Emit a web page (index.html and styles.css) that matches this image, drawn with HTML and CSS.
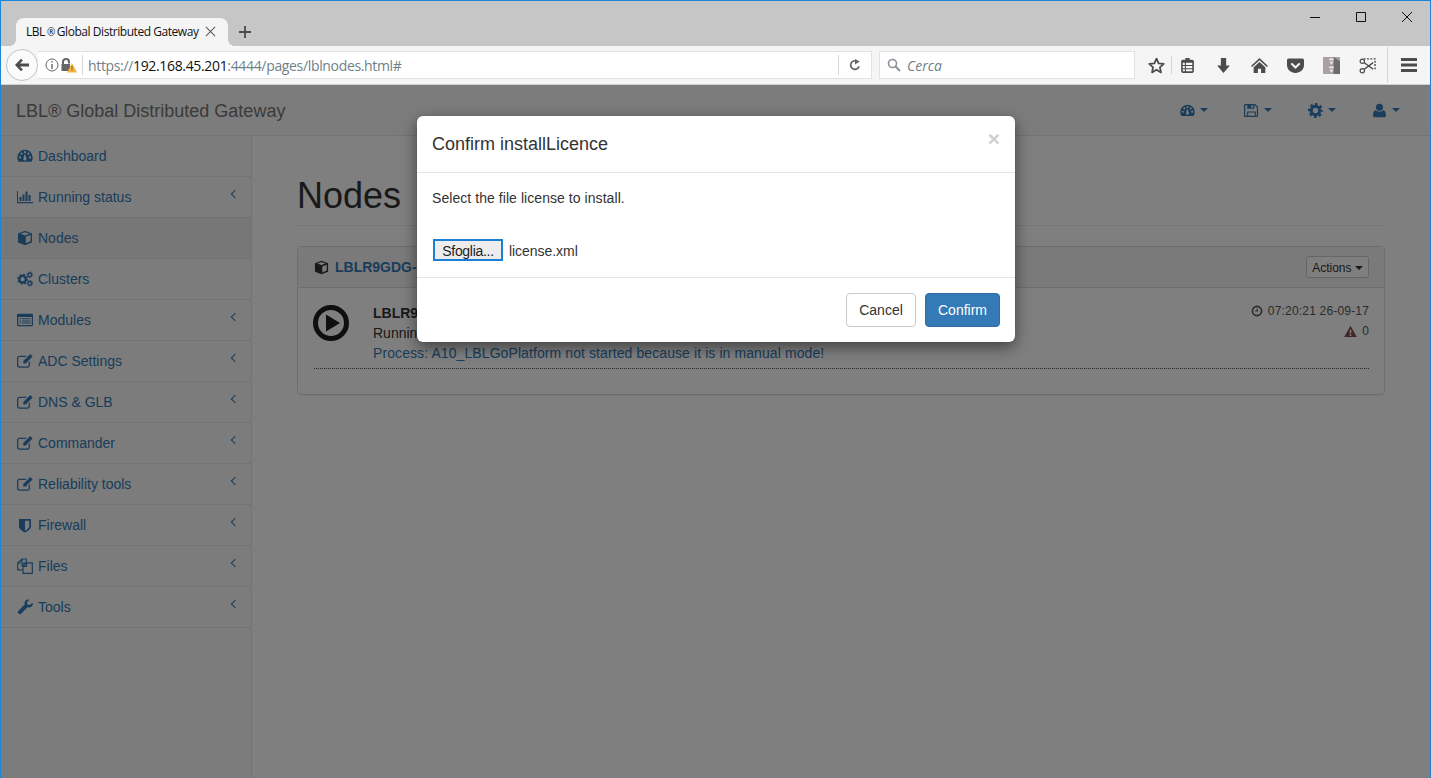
FILE: index.html
```html
<!DOCTYPE html>
<html lang="en">
<head>
<meta charset="utf-8">
<title>LBL® Global Distributed Gateway</title>
<link rel="stylesheet" href="styles.css">
</head>
<body>
<svg class="sprite" width="0" height="0" aria-hidden="true">
  <symbol id="i-dash" viewBox="0 0 16 16"><path fill-rule="evenodd" d="M8 1.800A7.700 7.700 0 0 0 .3 9.500c0 1.500.4 2.900 1.100 4 .1.200.3.300.5.300h12.200c.2 0 .4-.1.500-.3.700-1.100 1.100-2.500 1.100-4A7.700 7.700 0 0 0 8 1.800zM3 10.500a1.100 1.100 0 1 1 0-2.200 1.100 1.100 0 0 1 0 2.200zM4.600 6.800a1.100 1.100 0 1 1 0-2.200 1.100 1.100 0 0 1 0 2.200zM8 5.300a1.100 1.100 0 1 1 0-2.200 1.100 1.100 0 0 1 0 2.200zM8.900 12.300a1.600 1.600 0 0 1-2.500-1.500l.9-4.200h.8l1.400 4a1.600 1.600 0 0 1-.6 1.700zM11.400 6.800a1.100 1.100 0 1 1 0-2.200 1.100 1.100 0 0 1 0 2.200zM13 10.500a1.100 1.100 0 1 1 0-2.200 1.100 1.100 0 0 1 0 2.200z"/></symbol>
  <symbol id="i-bars" viewBox="0 0 16 16"><path d="M0 2h1v11h15v1.200H0zM2.500 8h2v4h-2zM5.500 5.500h2V12h-2zM8.500 2.500h2V12h-2zM11.500 6h2v6h-2z"/></symbol>
  <symbol id="i-cube" viewBox="0 0 16 16"><path fill-rule="evenodd" d="M8 .8l7 2.600v9L8 15.300l-7-2.900v-9zM3.500 3.700L8 5.400l4.500-1.700L8 2.200zM8.800 6.800v6.500l4.800-2V5z"/></symbol>
  <symbol id="i-cogs" viewBox="0 0 16 16"><circle cx="5.600" cy="8.200" r="3.300" fill="none" stroke="currentColor" stroke-width="2.400"/><circle cx="5.600" cy="8.200" r="4.800" fill="none" stroke="currentColor" stroke-width="1.400" stroke-dasharray="1.900 1.870"/><circle cx="12.800" cy="3.800" r="1.800" fill="none" stroke="currentColor" stroke-width="1.300"/><circle cx="12.800" cy="3.800" r="2.800" fill="none" stroke="currentColor" stroke-width="1" stroke-dasharray="1.200 1"/><circle cx="12.800" cy="12.300" r="1.800" fill="none" stroke="currentColor" stroke-width="1.300"/><circle cx="12.800" cy="12.300" r="2.800" fill="none" stroke="currentColor" stroke-width="1" stroke-dasharray="1.200 1"/></symbol>
  <symbol id="i-list" viewBox="0 0 16 16"><path fill-rule="evenodd" d="M1.200 1.800h13.600c.6 0 1.200.5 1.200 1.200v10c0 .7-.6 1.200-1.200 1.200H1.200C.6 14.200 0 13.700 0 13V3c0-.7.6-1.200 1.200-1.200zM1.300 5v7.700c0 .1.100.2.200.2h13c.1 0 .2-.1.200-.2V5zM2.500 6.200h1.800v1H2.500zM5 6.200h8.500v1H5zM2.500 8.400h1.800v1H2.500zM5 8.400h8.500v1H5zM2.500 10.600h1.800v1H2.500zM5 10.600h8.500v1H5z"/></symbol>
  <symbol id="i-edit" viewBox="0 0 16 16"><path d="M2.500 2.800h7.300L8.500 4.100H2.500c-.7 0-1.200.5-1.200 1.200v6.900c0 .7.500 1.200 1.200 1.200h7.900c.7 0 1.200-.5 1.200-1.200V9.300l1.300-1.300v4.200c0 1.400-1.100 2.500-2.500 2.500H2.500C1.100 14.700 0 13.600 0 12.200V5.300c0-1.400 1.100-2.500 2.500-2.500z"/><path d="M13.300 1.100l2.300 2.300-7 7H6.300V8.100z"/></symbol>
  <symbol id="i-shield" viewBox="0 0 16 16"><path fill-rule="evenodd" d="M2 2h12v7.500c0 3-4.500 5.300-6 6-1.500-.7-6-3-6-6zM8 3.700v10c1.700-.9 4.300-2.600 4.300-4.200V3.700z"/></symbol>
  <symbol id="i-files" viewBox="0 0 16 16"><path fill="none" stroke="currentColor" stroke-width="1.200" d="M5 8.500V6.800L8 4.500M5 11.800H.7V5L5 1h4.300v3.500M5 1v4H.7M6 15.300V8.300L9.500 4.800h5.800v10.500zM9.500 4.800v3.500H6"/></symbol>
  <symbol id="i-wrench" viewBox="0 0 16 16"><path d="M15.500 3.800c.3.800.3 1.700 0 2.400-.6 1.500-2.200 2.500-3.800 2.200-.4-.1-.7-.2-1-.3l-6.600 6.600c-.6.600-1.600.6-2.200 0l-.6-.6c-.6-.6-.6-1.600 0-2.200l6.600-6.600c-.2-.4-.3-.8-.3-1.300C7.600 2 9.300.5 11.200.5c.4 0 .8.100 1.200.2L9.900 3.300l.5 2.300 2.300.5z"/></symbol>
  <symbol id="i-save" viewBox="0 0 16 16"><path fill-rule="evenodd" d="M1.500 1h10.300L15 4.200v9.300c0 .8-.7 1.500-1.500 1.500h-12C.7 15 0 14.300 0 13.500v-11C0 1.700.7 1 1.500 1zM1.300 2.300v11.400h2V9h9.400v4.700h1V4.700l-2.400-2.400H11v3.900H3.500V2.300zM4.500 10.200v3.500h7v-3.500zM7.800 2.300V5h1.900V2.300z"/></symbol>
  <symbol id="i-gear" viewBox="0 0 16 16"><circle cx="8" cy="8" r="4.500" fill="none" stroke="currentColor" stroke-width="3.200"/><circle cx="8" cy="8" r="6.900" fill="none" stroke="currentColor" stroke-width="2.200" stroke-dasharray="2.800 2.620" stroke-dashoffset="1.400"/></symbol>
  <symbol id="i-user" viewBox="0 0 16 16"><circle cx="8" cy="4.600" r="3.800"/><path d="M4 7.800c1 1 2.400 1.500 4 1.500s3-.5 4-1.500c1.800.3 2.800 1.800 2.800 4.500v1.200c0 1-.7 1.700-1.700 1.700H2.900c-1 0-1.700-.7-1.700-1.700v-1.200c0-2.700 1-4.200 2.800-4.500z"/></symbol>
  <symbol id="i-clock" viewBox="0 0 16 16"><path fill-rule="evenodd" d="M8 .8a7.200 7.200 0 1 1 0 14.400A7.200 7.200 0 0 1 8 .8zM8 3a5 5 0 1 0 0 10A5 5 0 0 0 8 3zM9 4.800v3.900H5.700V7.300H7.600V4.800z"/></symbol>
  <symbol id="i-warn" viewBox="0 0 16 16"><path fill-rule="evenodd" d="M8 .8l7.800 14.100H.2zM7 5.700l.2 5h1.600l.2-5zM7 11.700v1.700h2v-1.700z"/></symbol>
</svg>

<header class="chrome">
  <div class="tabstrip">
    <div class="tab">
      <span class="tab-title">LBL<span class="reg">®</span>Global Distributed Gateway</span>
      <svg class="tab-x" viewBox="0 0 12 12"><path d="M1 1l10 10M11 1L1 11"/></svg>
    </div>
    <svg class="tab-plus" viewBox="0 0 12 12"><path d="M6 0v12M0 6h12"/></svg>
    <div class="win-controls">
      <svg class="win" viewBox="0 0 10 10"><path d="M0 5.500h10"/></svg>
      <svg class="win" viewBox="0 0 10 10"><path d="M.5.500h9v9h-9z"/></svg>
      <svg class="win" viewBox="0 0 10 10"><path d="M0 0l10 10M10 0L0 10"/></svg>
    </div>
  </div>
  <div class="toolbar">
    <button class="back" aria-label="Back">
      <svg viewBox="0 0 16 16"><path d="M1 8l6-6.300 1.900 1.800-3 3H15v3H5.900l3 3L7 14.300z"/></svg>
    </button>
    <div class="urlbar">
      <svg class="t-info" viewBox="0 0 14 14"><circle cx="7" cy="7" r="6" fill="none" stroke="#666" stroke-width="1"/><path d="M6.300 3h1.400v1.500H6.300zM6.300 6h1.400v5H6.300z" fill="#666"/></svg>
      <svg class="t-lock" viewBox="0 0 16 16"><path d="M1 7.500V5a4 4 0 0 1 8 0v1.500h-2V5a2 2 0 0 0-4 0v2.500zM.5 7h8.500v7H.5z" fill="#666"/><path d="M11 6l5 9.500H6z" fill="#f3b33d"/><path d="M10.600 9h.8v3.500h-.8zM10.600 13h.8v1h-.8z" fill="#5a4a20"/></svg>
      <span class="sep"></span>
      <span class="url"><span class="dim">https://</span>192.168.45.201<span class="dim">:4444/pages/lblnodes.html#</span></span>
      <span class="sep reload-sep"></span>
      <svg class="t-reload" viewBox="0 0 14 14"><path d="M11.800 8.500A5 5 0 1 1 8.500 2.300" fill="none" stroke="#666" stroke-width="2"/><path d="M7 0l5.500 3L7 6.500z" fill="#666"/></svg>
    </div>
    <div class="searchbar">
      <svg class="t-search" viewBox="0 0 14 14"><circle cx="5.500" cy="5.500" r="4" fill="none" stroke="#8f8f9d" stroke-width="1.600"/><path d="M8.500 8.500l4.500 4.500" stroke="#8f8f9d" stroke-width="2"/></svg>
      <span class="search-text">Cerca</span>
    </div>
    <div class="tools">
      <span class="tool star"><svg viewBox="0 0 16 16"><path d="M8 1.500l2 4.500 4.800.5-3.600 3.200 1 4.800L8 12l-4.200 2.500 1-4.800L1.200 6.500 6 6z" fill="none" stroke="#4c4c4c" stroke-width="1.700" stroke-linejoin="round"/></svg></span>
      <span class="tool-sep"></span>
      <span class="tool"><svg viewBox="0 0 16 16"><path fill-rule="evenodd" d="M6 1h4v1.500h2.500c.8 0 1.500.7 1.500 1.500v9.500c0 .8-.7 1.500-1.500 1.500h-9C2.700 15 2 14.300 2 13.500V4c0-.8.7-1.500 1.500-1.500H6zM3.500 5.500v2h2v-2zM6.500 5.500v2h6v-2zM3.500 8.500v2h2v-2zM6.500 8.500v2h6v-2zM3.500 11.500v2h2v-2zM6.500 11.500v2h6v-2z" fill="#4c4c4c"/></svg></span>
      <span class="tool"><svg viewBox="0 0 16 16"><path d="M5.500 1h5v7h3.500L8 15 2 8h3.500z" fill="#4c4c4c"/></svg></span>
      <span class="tool"><svg viewBox="0 0 16 16"><path d="M8 1L0 8.500l1 1L8 3l7 6.500 1-1zM8 4.700l-5.500 5V15h4v-4h3v4h4V9.700z" fill="#4c4c4c"/></svg></span>
      <span class="tool"><svg viewBox="0 0 16 16"><path fill-rule="evenodd" d="M1.500 1.500h13c.8 0 1.500.7 1.500 1.500v4.500c0 4.200-3.500 7.500-8 7.500S0 11.700 0 7.500V3c0-.8.7-1.500 1.500-1.500zM4.700 5.300L3.300 6.700 8 11.200l4.700-4.500-1.400-1.400L8 8.400z" fill="#4c4c4c"/></svg></span>
      <span class="tool"><svg viewBox="0 0 16 16"><path d="M0 0h16v16H0z" fill="#a9a1a6"/><path d="M10 0l6 4v12h-6z" fill="#6c6c6c"/><path d="M6 1.500h4v1.500H6zM6 4.500h4L8 7zM6 9h4v1.500H6zM6 12h4l-2 2.500z" fill="#eee"/></svg></span>
      <span class="tool"><svg viewBox="0 0 18 18"><path d="M5 2h12v11" fill="none" stroke="#4c4c4c" stroke-width="1.500" stroke-dasharray="2 1.500"/><circle cx="3.500" cy="4.500" r="2.300" fill="none" stroke="#4c4c4c" stroke-width="1.300"/><circle cx="3.500" cy="14.500" r="2.300" fill="none" stroke="#4c4c4c" stroke-width="1.300"/><path d="M5.300 5.800L15 13M5.300 13.200L15 6" stroke="#4c4c4c" stroke-width="1.500"/></svg></span>
      <span class="tool-sep menu-sep"></span>
      <span class="tool burger"><svg viewBox="0 0 16 14"><path d="M0 0h16v3H0zM0 5.500h16v3H0zM0 11h16v3H0z" fill="#4c4c4c"/></svg></span>
    </div>
  </div>
</header>

<div class="page">
  <nav class="topnav">
    <a class="brand">LBL® Global Distributed Gateway</a>
    <div class="topnav-menu">
      <a class="menu-item"><svg class="ico"><use href="#i-dash"/></svg><i class="caret"></i></a>
      <a class="menu-item"><svg class="ico"><use href="#i-save"/></svg><i class="caret"></i></a>
      <a class="menu-item"><svg class="ico"><use href="#i-gear"/></svg><i class="caret"></i></a>
      <a class="menu-item"><svg class="ico"><use href="#i-user"/></svg><i class="caret"></i></a>
    </div>
  </nav>
  <div class="content-wrap">
    <aside class="sidebar">
      <a class="side-row"><svg class="ico"><use href="#i-dash"/></svg>Dashboard</a>
      <a class="side-row"><svg class="ico"><use href="#i-bars"/></svg>Running status<span class="chev"></span></a>
      <a class="side-row active"><svg class="ico"><use href="#i-cube"/></svg>Nodes</a>
      <a class="side-row"><svg class="ico"><use href="#i-cogs"/></svg>Clusters</a>
      <a class="side-row"><svg class="ico"><use href="#i-list"/></svg>Modules<span class="chev"></span></a>
      <a class="side-row"><svg class="ico"><use href="#i-edit"/></svg>ADC Settings<span class="chev"></span></a>
      <a class="side-row"><svg class="ico"><use href="#i-edit"/></svg>DNS &amp; GLB<span class="chev"></span></a>
      <a class="side-row"><svg class="ico"><use href="#i-edit"/></svg>Commander<span class="chev"></span></a>
      <a class="side-row"><svg class="ico"><use href="#i-edit"/></svg>Reliability tools<span class="chev"></span></a>
      <a class="side-row"><svg class="ico"><use href="#i-shield"/></svg>Firewall<span class="chev"></span></a>
      <a class="side-row"><svg class="ico"><use href="#i-files"/></svg>Files<span class="chev"></span></a>
      <a class="side-row"><svg class="ico"><use href="#i-wrench"/></svg>Tools<span class="chev"></span></a>
    </aside>
    <main class="main">
      <h1 class="page-title">Nodes</h1>
      <section class="panel">
        <div class="panel-head">
          <svg class="ico ico-dark"><use href="#i-cube"/></svg>
          <a class="panel-title">LBLR9GDG-01</a>
          <button class="btn-xs">Actions <i class="caret caret-dark"></i></button>
        </div>
        <div class="panel-body">
          <div class="node-row">
            <svg class="play" viewBox="0 0 36 36"><circle cx="18" cy="18" r="15.500" fill="none" stroke="#1e1c20" stroke-width="5"/><path d="M13 9.500L27 18l-14 8.500z" fill="#1e1c20"/></svg>
            <div class="node-text">
              <strong>LBLR9GDG-01</strong>
              <span>Running</span>
              <span class="primary">Process: A10_LBLGoPlatform not started because it is in manual mode!</span>
            </div>
            <div class="node-meta">
              <span class="meta-line"><svg class="ico-sm"><use href="#i-clock"/></svg>07:20:21 26-09-17</span>
              <span class="meta-line"><svg class="ico-sm warn"><use href="#i-warn"/></svg>0</span>
            </div>
          </div>
        </div>
      </section>
    </main>
  </div>

  <div class="overlay">
    <div class="modal">
      <div class="modal-head">
        <h4 class="modal-title">Confirm installLicence</h4>
        <span class="close">×</span>
      </div>
      <div class="modal-body">
        <p class="modal-msg">Select the file license to install.</p>
        <div class="file-field"><button class="file-btn">Sfoglia...</button><span class="file-name">license.xml</span></div>
      </div>
      <div class="modal-foot">
        <button class="btn btn-default">Cancel</button>
        <button class="btn btn-primary">Confirm</button>
      </div>
    </div>
  </div>
</div>
</body>
</html>
```
FILE: styles.css
```css
* { box-sizing: border-box; }
html, body { height: 100%; }
body {
  margin: 0;
  height: 100vh;
  overflow: hidden;
  display: flex;
  flex-direction: column;
  border: 1px solid #1b86d8;
  border-bottom: 0;
  background: #fff;
  font: 14px/20px "Liberation Sans", Arial, sans-serif;
  color: #333;
}
.sprite { position: absolute; }
.chrome { flex: none; }

/* browser tabs */
.tabstrip {
  height: 45px;
  background: #c6c6c6;
  display: flex;
  align-items: flex-end;
  padding-left: 15px;
  position: relative;
}
.tab {
  width: 212px;
  height: 28px;
  background: #f5f5f5;
  border-radius: 8px 8px 0 0;
  display: flex;
  align-items: center;
  padding: 0 12px 1px 10px;
  justify-content: space-between;
  position: relative;
}
.tab::before, .tab::after {
  content: "";
  position: absolute;
  bottom: 0;
  width: 6px;
  height: 6px;
}
.tab::before { left: -6px; background: radial-gradient(circle at 0 0, #c6c6c6 5.5px, #f5f5f5 6px); }
.tab::after { right: -6px; background: radial-gradient(circle at 100% 0, #c6c6c6 5.5px, #f5f5f5 6px); }
.tab-title {
  font: 12px/16px "Open Sans", sans-serif;
  letter-spacing: -.45px;
  color: #111;
  white-space: nowrap;
}
.reg { margin: 0 2px; font-size: 10px; }
.tab-x { width: 11px; height: 11px; stroke: #555; stroke-width: 1.1; fill: none; }
.tab-plus { width: 12px; height: 12px; margin: 0 0 8px 11px; stroke: #4a4a4a; stroke-width: 1.800; fill: none; }
.win-controls {
  margin-left: auto;
  align-self: flex-start;
  display: flex;
  gap: 36px;
  padding: 11px 18px 0 0;
}
.win { width: 10px; height: 10px; stroke: #111; stroke-width: 1; fill: none; }

/* browser toolbar */
.toolbar {
  height: 39px;
  background: #f5f5f5;
  border-bottom: 1px solid #d0d0d0;
  display: flex;
  align-items: center;
  padding-left: 5px;
}
.back {
  flex: none;
  width: 32px;
  height: 32px;
  padding: 0;
  border: 1px solid #c4c4c4;
  border-radius: 50%;
  background: #fbfbfb;
  display: flex;
  align-items: center;
  justify-content: center;
  z-index: 1;
}
.back svg { width: 16px; height: 16px; fill: #4c4c4c; }
.urlbar {
  flex: none;
  width: 834px;
  height: 28px;
  background: #fff;
  border: 1px solid #e2e2e2;
  border-left: 0;
  display: flex;
  align-items: center;
  padding-left: 7px;
}
.t-info { width: 14px; height: 14px; }
.t-lock { width: 16px; height: 16px; margin-left: 2px; }
.sep { width: 1px; height: 20px; background: #d8d8d8; margin: 0 5px 0 5px; }
.url {
  font: 14px/20px "Open Sans", sans-serif;
  letter-spacing: -.34px;
  color: #111;
  white-space: nowrap;
  padding-top: 1px;
}
.dim { color: #6f7f88; }
.reload-sep { margin: 0 10px 0 auto; }
.t-reload { width: 12px; height: 12px; margin-right: 10px; }
.searchbar {
  flex: none;
  width: 256px;
  height: 28px;
  margin-left: 7px;
  background: #fff;
  border: 1px solid #e2e2e2;
  display: flex;
  align-items: center;
  padding-left: 7px;
}
.t-search { width: 14px; height: 14px; margin-right: 6px; }
.search-text { font: italic 14px/18px "Open Sans", sans-serif; color: #6f7f88; padding-top: 1px; }
.tools { flex: none; display: flex; align-items: center; margin-left: 3px; }
.tool { flex: none; width: 36px; display: flex; justify-content: center; align-items: center; }
.tool svg { width: 17px; height: 17px; }
.tool-sep { flex: none; width: 1px; height: 18px; background: #d4d4d4; margin: 0 -3px; }
.menu-sep { height: 36px; margin: 0 0 0 2px; }
.burger { width: 41px; }
.burger svg { width: 16px; height: 14px; }

/* application */
.page { flex: 1; position: relative; display: flex; flex-direction: column; min-height: 0; }
.topnav {
  flex: none;
  height: 51px;
  background: #f8f8f8;
  border-bottom: 1px solid #e7e7e7;
  display: flex;
  align-items: center;
  padding: 0 27px 0 15px;
}
.brand { font-size: 18px; color: #777; margin-top: 2px; }
.topnav-menu { margin-left: auto; display: flex; gap: 30px; }
.menu-item { display: flex; align-items: center; width: 34px; justify-content: center; gap: 5px; color: #337ab7; }
.ico { width: 16px; height: 16px; fill: currentColor; flex: none; }
.menu-item .ico { width: 15px; height: 15px; }
.caret {
  width: 0; height: 0;
  border-top: 4px solid #337ab7;
  border-left: 4px solid transparent;
  border-right: 4px solid transparent;
}
.content-wrap { flex: 1; display: flex; min-height: 0; }
.sidebar { width: 251px; flex: none; background: #f8f8f8; border-right: 1px solid #e7e7e7; }
.side-row {
  height: 41px;
  border-bottom: 1px solid #e7e7e7;
  display: flex;
  align-items: center;
  padding: 0 13px 0 16px;
  gap: 5px;
  color: #337ab7;
}
.side-row.active { background: #eee; }
.chev {
  width: 6px; height: 6px;
  margin: -7px 0 0 auto;
  border-left: 1.500px solid #337ab7;
  border-bottom: 1.500px solid #337ab7;
  transform: rotate(45deg);
}
.main { flex: 1; padding: 0 45px; min-width: 0; }
.page-title {
  margin: 40px 0 20px;
  padding-bottom: 9px;
  border-bottom: 1px solid #eee;
  font-size: 36px;
  line-height: 40px;
  font-weight: 500;
  color: #333;
}
.panel {
  border: 1px solid #ddd;
  border-radius: 4px;
  height: 149px;
  box-shadow: 0 1px 1px rgba(0,0,0,.05);
}
.panel-head {
  height: 41px;
  background: #f5f5f5;
  border-bottom: 1px solid #ddd;
  display: flex;
  align-items: center;
  padding: 0 15px 0 16px;
}
.panel-head .ico { width: 15px; height: 15px; }
.ico-dark { color: #333; }
.panel-title { margin-left: 6px; font-weight: 700; font-size: 14px; color: #337ab7; }
.btn-xs {
  margin-left: auto;
  height: 22px;
  width: 63px;
  padding: 1px 0 0;
  background: #fff;
  border: 1px solid #ccc;
  border-radius: 3px;
  font: 12px/18px "Liberation Sans", Arial, sans-serif;
  color: #333;
}
.caret-dark { display: inline-block; vertical-align: middle; border-top-color: #333; }
.panel-body { padding: 15px 15px 0 16px; }
.node-row { display: flex; border-bottom: 1px dotted #555; height: 66px; }
.play { width: 36px; height: 36px; margin: 2px 24px 0 -1px; flex: none; }
.node-text { display: flex; flex-direction: column; }
.primary { color: #337ab7; letter-spacing: .09px; }
.node-meta {
  margin: -2px 0 0 auto;
  display: flex;
  flex-direction: column;
  align-items: flex-end;
  font-size: 12px;
  letter-spacing: .18px;
  color: #555;
}
.meta-line { display: flex; align-items: center; gap: 5px; height: 20px; }
.ico-sm { width: 12px; height: 12px; fill: currentColor; }
.warn { width: 13px; height: 13px; color: #8a4a4a; }

/* modal */
.overlay {
  position: absolute;
  inset: 0;
  background: rgba(0,0,0,.5);
  display: flex;
  justify-content: center;
  align-items: flex-start;
  padding-top: 31px;
}
.modal {
  width: 598px;
  margin-left: 1px;
  background: #fff;
  border-radius: 6px;
  box-shadow: 0 5px 15px rgba(0,0,0,.5);
}
.modal-head {
  height: 57px;
  border-bottom: 1px solid #e5e5e5;
  display: flex;
  justify-content: space-between;
  padding: 15px;
}
.modal-title { margin: 0; font-size: 18px; line-height: 26px; font-weight: 500; color: #333; }
.close { font-size: 21px; line-height: 16px; font-weight: 700; color: #cfcfcf; }
.modal-body { height: 105px; padding: 15px 15px 0 15px; border-bottom: 1px solid #e5e5e5; }
.modal-msg { margin: 0 0 31px; letter-spacing: .06px; }
.file-field { display: flex; align-items: center; gap: 6px; padding-left: 1px; font-size: 14px; }
.file-name { padding-top: 2px; letter-spacing: -.05px; }
.file-btn {
  width: 70px;
  height: 22px;
  padding: 1px 0 0;
  background: #ededed;
  border: 2px solid #1b7fd4;
  font: 14px/18px "Liberation Sans", Arial, sans-serif;
  letter-spacing: -.3px;
  color: #222;
}
.modal-foot { display: flex; justify-content: flex-end; gap: 9px; padding: 15px; height: 64px; }
.btn {
  height: 34px;
  padding: 0;
  border: 1px solid transparent;
  border-radius: 4px;
  font: 14px/20px "Liberation Sans", Arial, sans-serif;
}
.btn-default { width: 70px; background: #fff; border-color: #ccc; color: #333; }
.btn-primary { width: 75px; background: #337ab7; border-color: #2e6da4; color: #fff; }
```
